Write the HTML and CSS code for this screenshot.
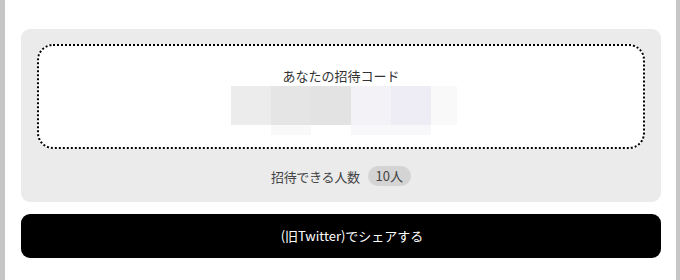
FILE: index.html
```html
<!DOCTYPE html>
<html lang="ja">
<head>
<meta charset="utf-8">
<link rel="stylesheet" href="styles.css">
</head>
<body>
<div class="frame">
  <div class="strip strip-left"></div>
  <main class="main">
    <section class="card">
      <div class="code-box">
        <div class="code-label">あなたの招待コード</div>
        <div class="mosaic">
          <div class="mrow">
            <span class="px" style="background:#ececec"></span>
            <span class="px" style="background:#e5e5e5"></span>
            <span class="px" style="background:#e3e3e3"></span>
            <span class="px" style="background:#f3f2f7"></span>
            <span class="px" style="background:#eeecf5"></span>
            <span class="px px-narrow" style="background:#f9f9f9"></span>
          </div>
          <div class="mrow mrow-low">
            <span class="px" style="background:transparent"></span>
            <span class="px" style="background:#f9f9f9"></span>
            <span class="px" style="background:transparent"></span>
            <span class="px" style="background:#f8f8fa"></span>
            <span class="px" style="background:#f8f8fa"></span>
            <span class="px px-narrow" style="background:transparent"></span>
          </div>
        </div>
      </div>
      <div class="count">
        <span class="count-label">招待できる人数</span>
        <span class="pill">10人</span>
      </div>
    </section>
    <button class="share" type="button">
      <span class="share-icon"></span>
      <span class="share-text">(旧Twitter)でシェアする</span>
    </button>
  </main>
  <div class="strip strip-right"></div>
</div>
</body>
</html>
```
FILE: styles.css
```css
html, body {
  margin: 0;
  padding: 0;
  background: #ffffff;
}
body {
  font-family: "Noto Sans CJK JP", "Noto Sans", sans-serif;
  color: #333333;
}
.frame {
  display: flex;
  width: 680px;
  height: 280px;
  overflow: hidden;
}
.strip {
  background: #c6c6c6;
  flex: none;
}
.strip-left { width: 5px; }
.strip-right { width: 4px; }
.main {
  flex: 1;
  padding: 29px 15px 0 16px;
  display: flex;
  flex-direction: column;
  gap: 12px;
}
.card {
  background: #ebebeb;
  border-radius: 9px;
  padding: 15px 16px 16px;
  display: flex;
  flex-direction: column;
  align-items: stretch;
}
.code-box {
  border: 2px dotted #000;
  border-radius: 16px;
  background: #ffffff;
  height: 82px;
  display: flex;
  flex-direction: column;
  align-items: center;
  padding-top: 19px;
  box-sizing: content-box;
}
.code-label {
  font-size: 13px;
  line-height: 21px;
  height: 21px;
  color: #333;
}
.mosaic {
  display: flex;
  flex-direction: column;
  margin-left: 6px;
}
.mrow {
  display: flex;
}
.px {
  display: block;
  width: 40px;
  height: 39px;
}
.px-narrow { width: 26px; }
.mrow-low .px { height: 10px; }
.count {
  margin-top: 17px;
  display: flex;
  justify-content: center;
  align-items: center;
  gap: 8px;
  height: 20px;
  font-size: 13px;
  color: #444;
}
.count-label {
  letter-spacing: -0.3px;
}
.pill {
  background: #d4d4d4;
  border-radius: 10px;
  height: 20px;
  line-height: 20px;
  padding: 0 8px 0 8px;
  font-size: 13px;
  color: #444;
}
.share {
  height: 44px;
  border: none;
  border-radius: 9px;
  background: #000;
  color: #fff;
  font-family: "Noto Sans CJK JP", "Noto Sans", sans-serif;
  font-size: 13px;
  display: flex;
  justify-content: center;
  align-items: center;
  gap: 0;
  padding: 0;
  cursor: pointer;
}
.share-icon {
  display: inline-block;
  width: 22px;
  height: 1px;
}
.share-text {
  line-height: 20px;
}
```
